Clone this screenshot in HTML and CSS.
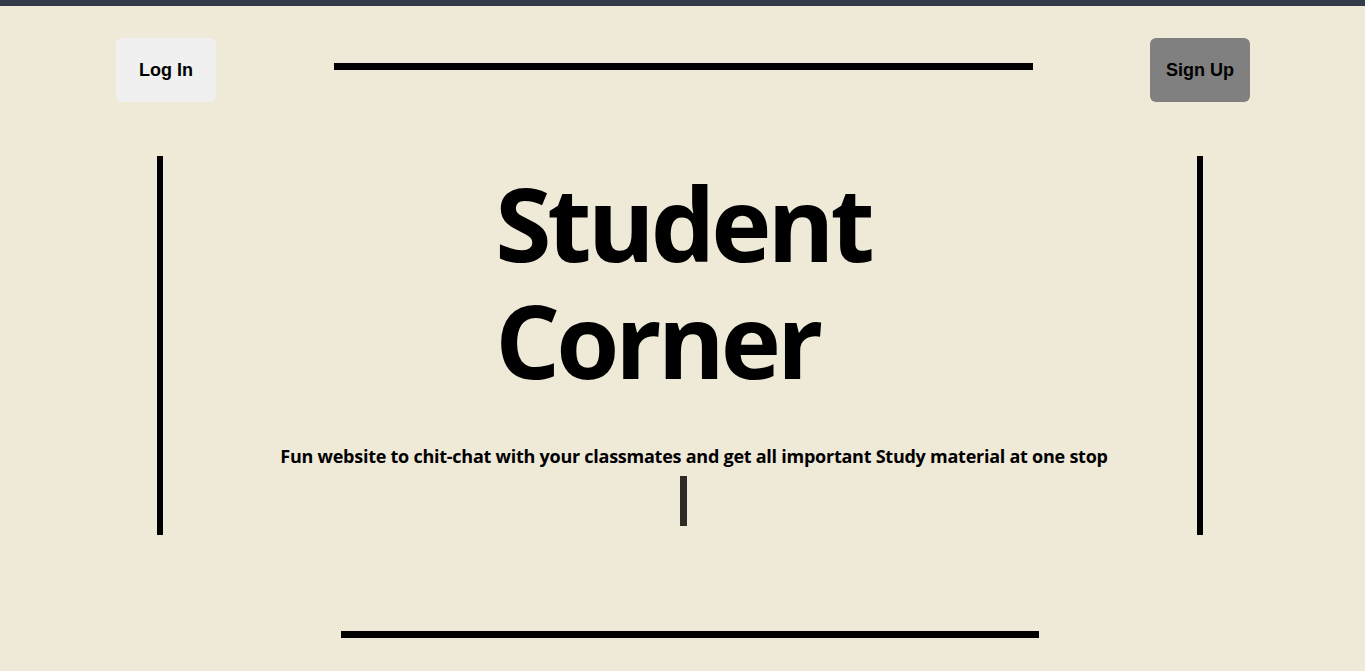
FILE: index.html
```html
<!DOCTYPE html>
<html lang="en">
<head>
<meta charset="utf-8">
<title>Student Corner</title>
<link rel="stylesheet" href="styles.css">
</head>
<body>
<div class="topbar"></div>
<header class="header">
  <button class="btn btn-login">Log In</button>
  <div class="rule rule-top"></div>
  <button class="btn btn-signup">Sign Up</button>
</header>
<main class="hero">
  <h1 class="title"><span class="title-line">Student</span><span class="title-line">Corner</span></h1>
  <p class="tagline">Fun website to chit-chat with your classmates and get all important Study material at one stop</p>
  <div class="cursor"></div>
</main>
<div class="rule rule-bottom"></div>
</body>
</html>
```

FILE: styles.css
```css
html, body {
  margin: 0;
  padding: 0;
}
body {
  background: #efe9d8;
  height: 671px;
  overflow: hidden;
  font-family: "Open Sans", "Liberation Sans", sans-serif;
}
.topbar {
  height: 6px;
  background: #333b4b;
}
.header {
  display: flex;
  justify-content: space-between;
  align-items: flex-start;
  padding: 32px 115px 0 116px;
}
.btn {
  width: 100px;
  height: 64px;
  border: none;
  border-radius: 6px;
  font-family: "Liberation Sans", Arial, sans-serif;
  font-weight: 700;
  font-size: 18px;
  color: #000;
  padding: 0;
}
.btn-login { background: #f0f0f0; }
.btn-signup { background: #808080; }
.rule {
  height: 7px;
  background: #000;
}
.rule-top {
  width: 699px;
  margin-top: 25px;
}
.hero {
  margin: 54px 162px 0 157px;
  height: 379px;
  border-left: 6px solid #000;
  border-right: 6px solid #000;
  display: flex;
  flex-direction: column;
  align-items: center;
}
.title {
  margin: 8px 0 0 6px;
  font-size: 102px;
  line-height: 117px;
  letter-spacing: -4px;
  font-weight: 700;
  color: #000;
  text-align: left;
}
.title-line {
  display: block;
  height: 117px;
}
.tagline {
  margin: 46px 0 0 28px;
  font-size: 18px;
  font-weight: 700;
  letter-spacing: -0.25px;
  color: #000;
}
.cursor {
  width: 7px;
  height: 50px;
  background: #2e2b26;
  margin: 8px 0 0 6px;
}
.rule-bottom {
  width: 698px;
  margin: 96px 0 0 341px;
}
```
